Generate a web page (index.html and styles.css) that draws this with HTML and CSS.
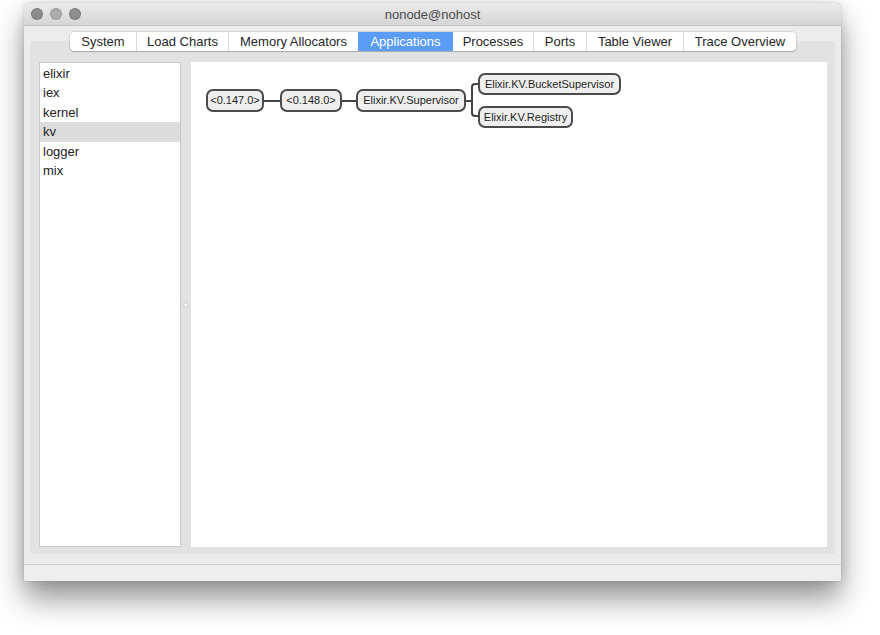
FILE: index.html
```html
<!DOCTYPE html>
<html>
<head>
<meta charset="utf-8">
<title>nonode@nohost</title>
<link rel="stylesheet" href="styles.css">
</head>
<body>
<div class="window">
  <div class="titlebar">
    <div class="lights">
      <span class="light l1"></span>
      <span class="light l2"></span>
      <span class="light l3"></span>
    </div>
    <div class="title">nonode@nohost</div>
  </div>
  <div class="body">
    <div class="tabs">
      <div class="tab t-system">System</div>
      <div class="tab t-load">Load Charts</div>
      <div class="tab t-mem">Memory Allocators</div>
      <div class="tab t-apps active">Applications</div>
      <div class="tab t-proc">Processes</div>
      <div class="tab t-ports">Ports</div>
      <div class="tab t-table">Table Viewer</div>
      <div class="tab t-trace">Trace Overview</div>
    </div>
    <div class="panel">
      <ul class="applist">
        <li>elixir</li>
        <li>iex</li>
        <li>kernel</li>
        <li class="selected">kv</li>
        <li>logger</li>
        <li>mix</li>
      </ul>
      <div class="splitter"><span class="handle"></span></div>
      <div class="canvas">
        <div class="tree">
          <div class="node n1">&lt;0.147.0&gt;</div>
          <span class="edge e1"></span>
          <div class="node n2">&lt;0.148.0&gt;</div>
          <span class="edge e2"></span>
          <div class="node n3">Elixir.KV.Supervisor</div>
          <span class="edge e3"></span>
          <div class="children">
            <div class="child"><span class="branch top"></span><div class="node c1">Elixir.KV.BucketSupervisor</div></div>
            <div class="child"><span class="branch bottom"></span><div class="node c2">Elixir.KV.Registry</div></div>
          </div>
        </div>
      </div>
    </div>
    <div class="statusbar"></div>
  </div>
</div>
</body>
</html>
```

FILE: styles.css
```css
* { box-sizing: border-box; }

html, body {
  margin: 0;
  padding: 0;
  height: 100%;
  overflow: hidden;
  background: #ffffff;
  font-family: "Liberation Sans", Arial, sans-serif;
  font-size: 13px;
  color: #222;
}

body {
  padding-top: 3px;
  padding-left: 24px;
}

.window {
  width: 817px;
  height: 578px;
  border-radius: 5px 5px 2px 2px;
  background: #ececec;
  display: flex;
  flex-direction: column;
  overflow: hidden;
  box-shadow: 0 18px 30px rgba(0, 0, 0, 0.42), 0 0 12px rgba(0, 0, 0, 0.12), 0 0 1px rgba(0, 0, 0, 0.4);
}

.titlebar {
  height: 23px;
  flex: none;
  background: linear-gradient(#ebebeb, #d6d6d6);
  border-bottom: 1px solid #c4c4c4;
  display: flex;
  align-items: center;
  position: relative;
}

.lights {
  display: flex;
  gap: 7px;
  padding-left: 7px;
}

.light {
  width: 12px;
  height: 12px;
  border-radius: 50%;
  border: 1px solid rgba(0, 0, 0, 0.12);
}
.l1 { background: #8b8b8b; }
.l2 { background: #adadad; }
.l3 { background: #8e8e8e; }

.title {
  position: absolute;
  left: 0;
  right: 0;
  top: 4px;
  text-align: center;
  color: #4a4a4a;
  font-size: 13px;
}

.body {
  flex: 1;
  display: flex;
  flex-direction: column;
  min-height: 0;
}

.tabs {
  margin: 6px 0 0 46px;
  align-self: flex-start;
  display: flex;
  height: 19px;
  background: #fff;
  border-radius: 4px;
  box-shadow: 0 0 0 0.5px rgba(0, 0, 0, 0.18), 0 1px 1px rgba(0, 0, 0, 0.18);
  position: relative;
  z-index: 1;
  flex: none;
}

.tab {
  line-height: 19px;
  color: #262626;
  border-left: 1px solid #dedede;
  white-space: nowrap;
  text-align: center;
}
.tab:first-child { border-left: none; }
.t-system { width: 66px; }
.t-load { width: 92px; }
.t-mem { width: 130px; }
.t-apps { width: 94px; }
.t-proc { width: 81px; }
.t-ports { width: 53px; }
.t-table { width: 97px; }
.t-trace { width: 113px; }

.tab.active {
  background: #5b9cf6;
  color: #fff;
  border-left-color: #5b9cf6;
}
.tab.active + .tab { border-left-color: #5b9cf6; }

.panel {
  margin: -10px 6px 0;
  height: 513px;
  flex: none;
  background: #e2e2e2;
  border-radius: 3px;
  padding: 21px 8px 7px 9px;
  display: flex;
}

.applist {
  list-style: none;
  margin: 0;
  padding: 1px 0 0;
  width: 142px;
  background: #fff;
  border: 1px solid #c9c9c9;
  flex: none;
}

.applist li {
  height: 19.4px;
  line-height: 19.4px;
  padding-left: 3px;
  color: #222;
}
.applist li.selected { background: #dcdcdc; }

.splitter {
  width: 10px;
  flex: none;
  display: flex;
  align-items: center;
  justify-content: center;
}
.handle {
  width: 6px;
  height: 6px;
  border-radius: 50%;
  background: #f3f3f3;
  border: 1px solid #cdcdcd;
}

.canvas {
  flex: 1;
  background: #fff;
  padding: 11px 0 0 15px;
}

.tree {
  display: flex;
  align-items: center;
}

.node {
  height: 23px;
  border: 2px solid #4b4b4b;
  border-radius: 7px;
  background: #efefef;
  font-size: 11px;
  line-height: 19px;
  color: #1e1e1e;
  white-space: nowrap;
  text-align: center;
  flex: none;
}
.n1 { width: 58px; }
.n2 { width: 62px; }
.n3 { width: 110px; }
.c1 { width: 143px; }
.c2 { width: 95px; }
.child .node { height: 22px; line-height: 18px; }

.edge {
  height: 2px;
  background: #444;
  flex: none;
}
.e1 { width: 16px; }
.e2 { width: 14px; }
.e3 { width: 5px; }

.children {
  display: flex;
  flex-direction: column;
  gap: 11px;
}

.child {
  display: flex;
  align-items: center;
}

.branch {
  width: 7px;
  flex: none;
  border-left: 2px solid #444;
  align-self: stretch;
}
.branch.top {
  margin-top: 10px;
  margin-bottom: -6px;
  border-top: 2px solid #444;
  border-top-left-radius: 4px;
}
.branch.bottom {
  margin-top: -6px;
  height: 17px;
  align-self: flex-start;
  border-bottom: 2px solid #444;
  border-bottom-left-radius: 4px;
}

.statusbar {
  margin-top: 10px;
  flex: 1;
  border-top: 1px solid #d0d0d0;
  background: #eeeeee;
}
```
